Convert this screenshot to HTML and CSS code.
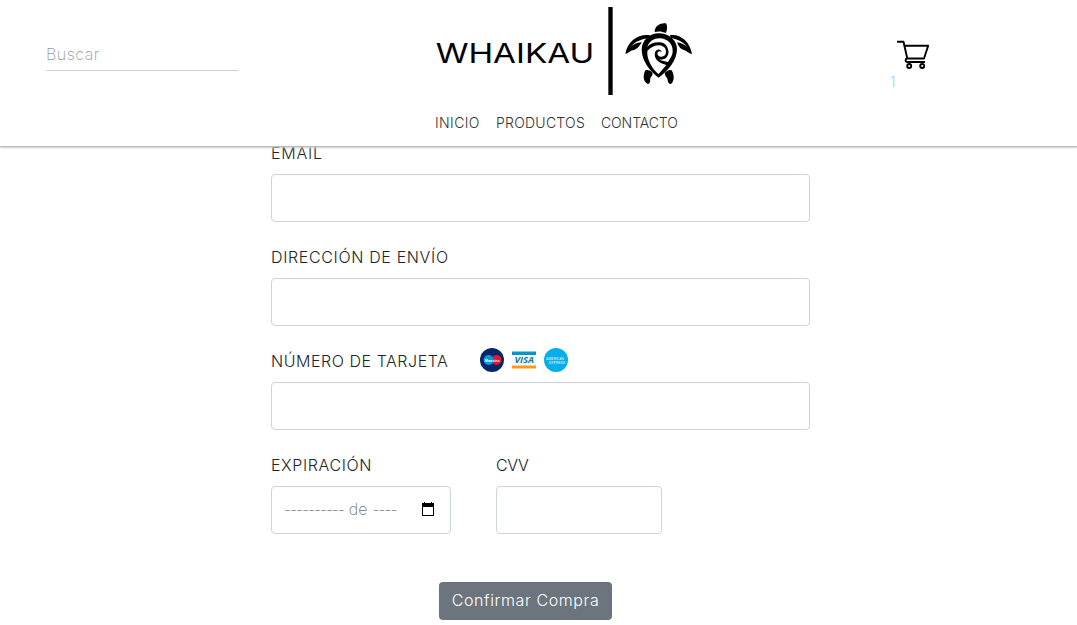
FILE: index.html
```html
<!DOCTYPE html>
<html lang="es">
<head>
<meta charset="utf-8">
<title>Whaikau</title>
<link rel="stylesheet" href="styles.css">
</head>
<body>
<header class="header">
  <div class="search"><span class="search-text">Buscar</span></div>
  <div class="brand">
    <svg class="logo" viewBox="0 0 840 300" role="img" aria-label="Whaikau">
      <text class="wordmark" x="32" y="188" textLength="476" lengthAdjust="spacingAndGlyphs">WHAIKAU</text>
      <rect x="550" y="21" width="13" height="264"/>
      <g transform="translate(570 45)">
        <path d="M119 51C119 34 133 23 153 25C158 33 157 43 153 54C143 49 130 48 119 51Z"/>
        <path d="M105 61C75 55 38 75 31 116C43 115 46 105 57 105C66 103 76 91 80 82C65 83 54 89 46 96C61 78 82 72 100 69Z"/>
        <path d="M164 61C192 55 225 77 231 118C220 115 217 108 207 105C197 103 190 93 186 82C201 84 210 90 218 97C205 80 187 73 168 69Z"/>
        <path d="M91 166C83 181 84 200 98 207C108 206 104 197 106 190C109 183 117 178 110 170Q100 162 91 166Z"/>
        <path d="M170 166C179 181 178 200 168 207C156 206 160 196 156 189C152 183 146 176 152 171Q162 162 170 166Z"/>
        <path d="M132 55C102 55 80 77 80 104C81 139 105 169 131 188C158 169 186 136 186 103C186 76 162 55 132 55Z"/>
        <path class="cut" d="M97 95C104 77 119 69 135 70C157 71 174 87 173 108C173 123 165 131 159 141C149 139 142 139 132 133C153 138 163 121 160 106C157 90 147 82 134 82C116 81 104 88 97 95Z"/>
        <path class="cut" d="M97 108C106 97 120 91 133 91C148 92 156 104 152 117C147 127 133 128 128 119C125 111 133 105 140 111C138 100 123 101 120 113C116 130 129 143 154 150L131 177C116 167 94 135 97 108Z"/>
      </g>
    </svg>
    <nav class="nav">
      <a class="inicio">INICIO</a><a class="productos">PRODUCTOS</a><a class="contacto">CONTACTO</a>
    </nav>
  </div>
  <div class="cart">
    <svg class="cart-icon" viewBox="0 0 32 30"><path d="M0 1.7H6.5L10.3 18.5H27L31.2 5.7H8M10.3 18.5Q8.6 18.7 8.6 20.2Q8.6 22 10.6 22H28"/><circle cx="12.2" cy="26" r="2"/><circle cx="25.2" cy="26" r="2"/></svg>
    <span class="count">1</span>
  </div>
</header>
<main class="form">
  <div class="field"><label class="email"><span>EMAIL</span></label><div class="input"></div></div>
  <div class="field"><label class="address"><span>DIRECCIÓN DE ENVÍO</span></label><div class="input"></div></div>
  <div class="field">
    <div class="label-row"><label class="card"><span>NÚMERO DE TARJETA</span></label>
      <div class="cards">
        <svg viewBox="0 0 24 24"><circle cx="12" cy="12" r="12" fill="#06266a"/><circle cx="16.4" cy="12" r="5" fill="#eb1424"/><circle cx="8.6" cy="12" r="5" fill="#079bdc"/><text x="4.7" y="13.6" textLength="15" lengthAdjust="spacingAndGlyphs" class="maestro">Maestro</text></svg>
        <svg viewBox="0 0 24 24"><path fill="#fafafa" d="M0 4H24V20H0Z"/><path fill="#0796c7" d="M0 3.5H24V7H0Z"/><path fill="#f69b20" d="M0 17.5H24V20.5H0Z"/><text x="2.5" y="15.3" textLength="19.5" lengthAdjust="spacingAndGlyphs" class="visa">VISA</text></svg>
        <svg viewBox="0 0 24 24"><circle cx="12" cy="12" r="12" fill="#06aeea"/><g class="amex"><text x="2" y="11.6" textLength="18" lengthAdjust="spacingAndGlyphs">AMERICAN</text><text x="5" y="15.6" textLength="16" lengthAdjust="spacingAndGlyphs">EXPRESS</text></g></svg>
      </div>
    </div>
    <div class="input"></div>
  </div>
  <div class="pair">
    <div class="field expiry"><label class="expiration"><span>EXPIRACIÓN</span></label><div class="input date"><span class="date-text"><span class="dashes">----------</span><span>de</span><span class="dashes">----</span></span><svg class="calendar" viewBox="0 0 14 14"><path fill-rule="evenodd" d="M1 1H3V0H4V1H10V0H11V1H13V14H1ZM2 5V13H12V5Z"/></svg></div></div>
    <div class="field security"><label class="cvv"><span>CVV</span></label><div class="input"></div></div>
  </div>
  <button class="submit">Confirmar Compra</button>
</main>
</body>
</html>
```
FILE: styles.css
```css
* { box-sizing: border-box; }
body { margin: 0; width: 1077px; height: 625px; overflow: hidden; background: #fff; color: #212529; font: 300 16px/24px Inter, "Open Sans", sans-serif; }
.header { position: relative; z-index: 1; display: grid; grid-template-columns: 379px 466px 1fr; height: 147px; padding-left: 46px; background: #fff; border-bottom: 1px solid #bbb; box-shadow: 0 1px 2px #ccc; }
.search { width: 192px; height: 71px; padding-top: 42px; border-bottom: 1px solid #ced0d2; color: #929aa2; }
.search-text { font-weight: 200; letter-spacing: .5px; }
.logo { display: block; width: 280px; height: 100px; }
.wordmark { font: 400 82px Inter, sans-serif; }
.cut { fill: #fff; }
.nav { display: flex; gap: 16px; padding: 11px 0 0 10px; font-size: 14px; color: #333; }
.nav a { white-space: nowrap; }
.inicio { width: 45px; letter-spacing: .4px; }
.productos { width: 89px; letter-spacing: .25px; }
.contacto { width: 77px; letter-spacing: -.1px; }
.cart { display: flex; flex-direction: column; padding-top: 40px; }
.cart-icon { width: 32px; height: 30px; margin-left: 6px; fill: none; stroke: #000; stroke-width: 1.9; stroke-linejoin: round; }
.count { margin-left: -1px; font-size: 14px; line-height: 24px; color: #a8ccff; }
.form { width: 539px; margin-left: 271px; margin-top: -6px; }
.field { height: 104px; }
label { display: block; height: 33px; white-space: nowrap; }
.input { height: 48px; border: 1px solid #ced4da; border-radius: 4px; background: #fff; }
.email { letter-spacing: .8px; }
.address { letter-spacing: .65px; }
.card { width: 209px; letter-spacing: .55px; }
.expiration { letter-spacing: .6px; }
.cvv { letter-spacing: -.3px; }
.label-row { display: flex; }
.cards { display: flex; gap: 8px; }
.cards svg { width: 24px; height: 24px; margin-top: -1px; overflow: visible; letter-spacing: 0; }
.maestro { font: bold 4.2px "Liberation Sans", sans-serif; fill: #fff; }
.visa { font: italic bold 9px "Open Sans", sans-serif; fill: #087eaa; }
.amex { font: bold 4px "Liberation Sans", sans-serif; fill: #b3e8fb; }
.pair { display: flex; gap: 45px; }
.expiry { width: 180px; }
.security { width: 166px; }
.date { display: flex; align-items: center; justify-content: space-between; padding: 0 15px 2px 12px; color: #6c757d; font-weight: 200; }
.date-text { display: flex; gap: 5px; }
.dashes { letter-spacing: -1.15px; }
.calendar { width: 14px; height: 14px; }
.submit { display: block; width: 173px; height: 38px; margin: 25px 0 0 168px; padding: 0 0 2px; border: 0; border-radius: 4px; background: #6c757d; color: #fff; font: 300 16px/24px Inter, sans-serif; white-space: nowrap; letter-spacing: .6px; }
```
